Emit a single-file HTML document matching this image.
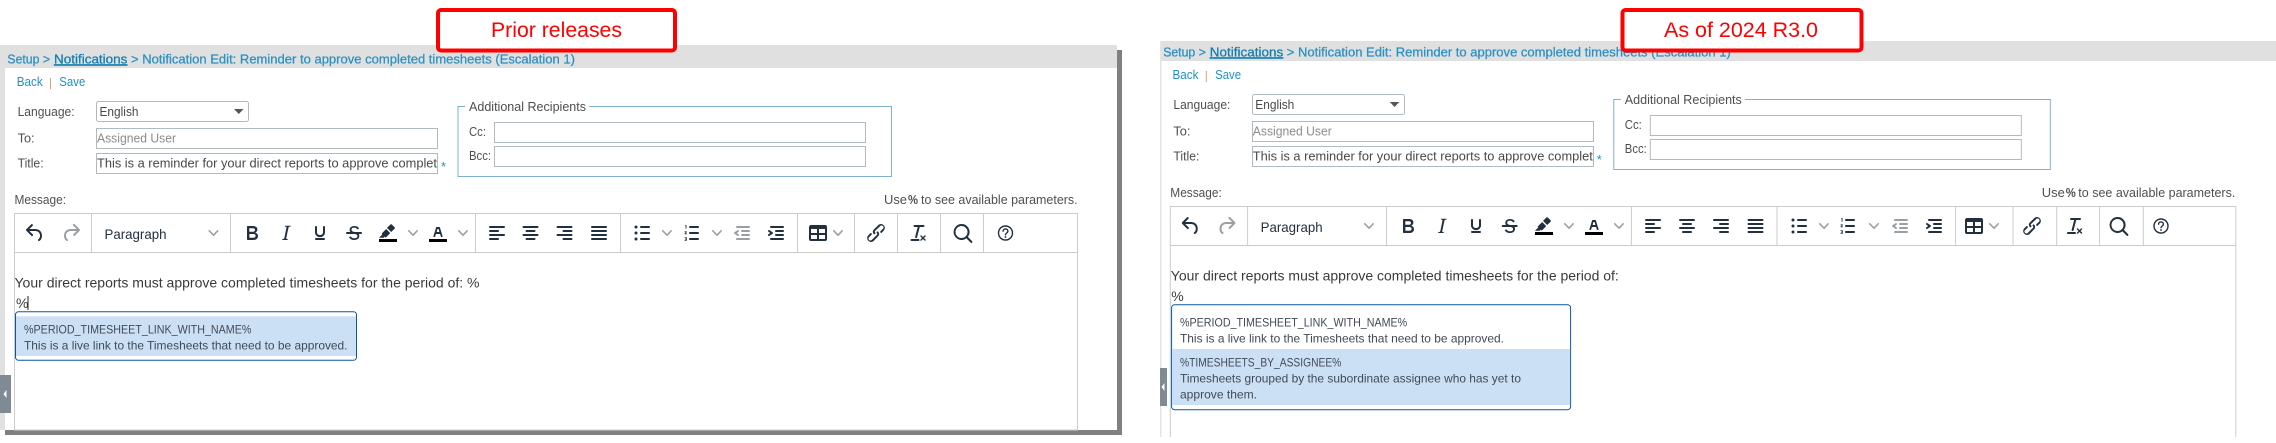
<!DOCTYPE html>
<html lang="en"><head><meta charset="utf-8"><title>Notification Edit comparison</title>
<style>
html,body{margin:0;padding:0;background:#fff;width:2276px;height:443px;overflow:hidden}
svg{display:block}
text{font-family:"Liberation Sans",sans-serif;white-space:pre}
.bc{font-size:13px;fill:#2a90c2;stroke:#2a90c2;stroke-width:.25}
.lk{font-size:13px;fill:#2290c6}
.lb{font-size:13px;fill:#4f4f4f}
.in{font-size:13px;fill:#484848}
.ph{font-size:13px;fill:#8c8c8c}
.msg{font-size:14px;fill:#3a3a3a}
.pp{font-size:12px;fill:#414a55}
.ibox{fill:#fff;stroke:#b0bac0;stroke-width:1}
.i{fill:#222f3e}
.d{fill:#9a9fa5}
.ch{fill:#9aa0a6}
.sep{stroke:#ccc;stroke-width:1}
.red{fill:#f00;font-size:21px}
</style></head><body>
<svg width="2276" height="443" viewBox="0 0 2276 443" xmlns="http://www.w3.org/2000/svg">
<defs>
<symbol id="undo" viewBox="0 0 24 24"><path d="M6.4 8H12c3.7 0 6.2 2 6.8 5.1.6 2.7-.4 5.6-2.3 6.8a1 1 0 0 1-1-1.8c1.1-.7 1.8-2.7 1.4-4.6-.5-2.1-2.1-3.5-4.9-3.5H6.4l3.3 3.3a1 1 0 1 1-1.4 1.4l-5-5a1 1 0 0 1 0-1.4l5-5a1 1 0 0 1 1.4 1.4L6.4 8z"/></symbol>
<symbol id="redo" viewBox="0 0 24 24"><path d="M17.6 10H12c-2.8 0-4.4 1.4-4.9 3.5-.4 2 .3 4 1.4 4.6a1 1 0 1 1-1 1.8c-2-1.2-2.9-4.1-2.3-6.8.6-3 3-5.1 6.8-5.1h5.6l-3.3-3.3a1 1 0 1 1 1.4-1.4l5 5a1 1 0 0 1 0 1.4l-5 5a1 1 0 0 1-1.4-1.4l3.3-3.3z"/></symbol>
<symbol id="bold" viewBox="0 0 24 24"><path d="M7.8 19c-.3 0-.5 0-.6-.2l-.2-.5V5.7c0-.2 0-.4.2-.5l.6-.2h5c1.5 0 2.7.3 3.5 1 .7.6 1.1 1.4 1.1 2.5a3 3 0 0 1-.6 1.9c-.4.6-1 1-1.6 1.2.4.1.9.3 1.3.6s.8.7 1 1.2c.4.4.5 1 .5 1.6 0 1.3-.4 2.3-1.3 3-.8.7-2 1-3.7 1H7.8zm5-8.3c.6 0 1.2-.1 1.6-.5.4-.3.6-.7.6-1.3 0-1.1-.8-1.7-2.3-1.7H9.3v3.5h3.5zm.5 6c.7 0 1.3-.1 1.7-.4.4-.4.6-.9.6-1.5s-.2-1-.7-1.4c-.4-.3-1-.4-2-.4H9.4v3.8h4z"/></symbol>
<symbol id="ital" viewBox="0 0 24 24"><path d="M16.7 4.7l-.1.9h-.3c-.6 0-1 0-1.4.3-.3.3-.4.6-.5 1.1l-2.1 9.8v.6c0 .5.4.8 1.4.8h.2l-.2.8H8l.2-.8h.2c1.1 0 1.8-.5 2-1.5l2-9.8.1-.5c0-.6-.4-.8-1.4-.8h-.3l.2-.9h5.8z"/></symbol>
<symbol id="under" viewBox="0 0 24 24"><path d="M16 5c.6 0 1 .4 1 1v5.5a4 4 0 0 1-.4 1.8l-1 1.4a5.3 5.3 0 0 1-5.5 1 5 5 0 0 1-1.6-1c-.5-.4-.8-.9-1.1-1.4a4 4 0 0 1-.4-1.8V6c0-.6.4-1 1-1s1 .4 1 1v5.5c0 .3 0 .6.2 1l.6.7a3.3 3.3 0 0 0 2.2.8 3.4 3.4 0 0 0 2.2-.8c.3-.2.4-.5.6-.8l.2-.9V6c0-.6.4-1 1-1zM8 17h8c.6 0 1 .4 1 1s-.4 1-1 1H8a1 1 0 0 1 0-2z"/></symbol>
<symbol id="strike" viewBox="0 0 24 24"><path d="M15.6 8.5c-.5-.7-1-1.1-1.3-1.3-.6-.4-1.3-.6-2-.6-2.7 0-2.8 1.7-2.8 2.1 0 1.6 1.8 2 3.2 2.3 4.4.9 4.6 2.8 4.6 3.9 0 1.4-.7 4.1-5 4.1A6.2 6.2 0 0 1 7 16.4l1.5-1.1c.4.6 1.6 2 3.7 2 1.6 0 2.5-.4 3-1.2.4-.8.3-2-.8-2.6-.7-.4-1.6-.7-2.9-1-1-.2-3.9-.8-3.9-3.6C7.6 6 10.3 5 12.4 5c2.9 0 4.2 1.6 4.7 2.4l-1.5 1.1z"/><path d="M5 11h14a1 1 0 0 1 0 2H5a1 1 0 0 1 0-2z"/></symbol>
<symbol id="hl" viewBox="0 0 24 24"><path fill="#000" d="M3 18h18v3H3z"/><path d="M7.7 16.7H3l3.3-3.3-.7-.8L10.2 8l4 4.1-4 4.2c-.2.2-.6.2-.8 0l-.7-.7zm7.5-5.7L11 6.9l3.4-3.4c.4-.4 1-.4 1.4 0l2.8 2.7c.4.4.4 1 0 1.5L15.2 11z"/></symbol>
<symbol id="tc" viewBox="0 0 24 24"><path fill="#000" d="M3 18h18v3H3z"/><path d="M8.7 16h-.8a.5.5 0 0 1-.5-.6l2.7-9c.1-.3.3-.4.5-.4h2.8c.2 0 .4.1.5.4l2.7 9a.5.5 0 0 1-.5.6h-.8a.5.5 0 0 1-.4-.4l-.7-2.2c0-.3-.3-.4-.5-.4h-3.4c-.2 0-.4.1-.5.4l-.7 2.2c0 .3-.2.4-.4.4zm2.6-7.6l-.6 2a.5.5 0 0 0 .5.6h1.6a.5.5 0 0 0 .5-.6l-.6-2c0-.3-.3-.4-.5-.4h-.4c-.2 0-.4.1-.5.4z"/></symbol>
<symbol id="al" viewBox="0 0 24 24"><path d="M5 5h14c.6 0 1 .4 1 1s-.4 1-1 1H5a1 1 0 1 1 0-2zm0 4h8c.6 0 1 .4 1 1s-.4 1-1 1H5a1 1 0 1 1 0-2zm0 8h8c.6 0 1 .4 1 1s-.4 1-1 1H5a1 1 0 0 1 0-2zm0-4h14c.6 0 1 .4 1 1s-.4 1-1 1H5a1 1 0 0 1 0-2z"/></symbol>
<symbol id="ac" viewBox="0 0 24 24"><path d="M5 5h14c.6 0 1 .4 1 1s-.4 1-1 1H5a1 1 0 1 1 0-2zm3 4h8c.6 0 1 .4 1 1s-.4 1-1 1H8a1 1 0 1 1 0-2zm0 8h8c.6 0 1 .4 1 1s-.4 1-1 1H8a1 1 0 0 1 0-2zm-3-4h14c.6 0 1 .4 1 1s-.4 1-1 1H5a1 1 0 0 1 0-2z"/></symbol>
<symbol id="ar" viewBox="0 0 24 24"><path d="M5 5h14c.6 0 1 .4 1 1s-.4 1-1 1H5a1 1 0 1 1 0-2zm6 4h8c.6 0 1 .4 1 1s-.4 1-1 1h-8a1 1 0 0 1 0-2zm0 8h8c.6 0 1 .4 1 1s-.4 1-1 1h-8a1 1 0 0 1 0-2zm-6-4h14c.6 0 1 .4 1 1s-.4 1-1 1H5a1 1 0 0 1 0-2z"/></symbol>
<symbol id="aj" viewBox="0 0 24 24"><path d="M5 5h14c.6 0 1 .4 1 1s-.4 1-1 1H5a1 1 0 1 1 0-2zm0 4h14c.6 0 1 .4 1 1s-.4 1-1 1H5a1 1 0 1 1 0-2zm0 4h14c.6 0 1 .4 1 1s-.4 1-1 1H5a1 1 0 0 1 0-2zm0 4h14c.6 0 1 .4 1 1s-.4 1-1 1H5a1 1 0 0 1 0-2z"/></symbol>
<symbol id="ul" viewBox="0 0 24 24"><path d="M11 5h8c.6 0 1 .4 1 1s-.4 1-1 1h-8a1 1 0 0 1 0-2zm0 6h8c.6 0 1 .4 1 1s-.4 1-1 1h-8a1 1 0 0 1 0-2zm0 6h8c.6 0 1 .4 1 1s-.4 1-1 1h-8a1 1 0 0 1 0-2z"/><circle cx="6" cy="6" r="1.5"/><circle cx="6" cy="12" r="1.5"/><circle cx="6" cy="18" r="1.5"/></symbol>
<symbol id="ol" viewBox="0 0 24 24"><path d="M10 17h8c.6 0 1 .4 1 1s-.4 1-1 1h-8a1 1 0 0 1 0-2zm0-6h8c.6 0 1 .4 1 1s-.4 1-1 1h-8a1 1 0 0 1 0-2zm0-6h8c.6 0 1 .4 1 1s-.4 1-1 1h-8a1 1 0 1 1 0-2z"/><path d="M5.6 4h.9v3.6h-.9V5H5zM4.6 10.4h2.2v.8l-1.3 1.2h1.3v.8H4.6v-.8l1.3-1.2H4.6zM4.6 16.3h2.2v3.4H4.6v-.8h1.3v-.5H4.9v-.7h1V17H4.6z"/></symbol>
<symbol id="out" viewBox="0 0 24 24"><path d="M7 5h12c.6 0 1 .4 1 1s-.4 1-1 1H7a1 1 0 1 1 0-2zm5 4h7c.6 0 1 .4 1 1s-.4 1-1 1h-7a1 1 0 0 1 0-2zm0 4h7c.6 0 1 .4 1 1s-.4 1-1 1h-7a1 1 0 0 1 0-2zm-5 4h12a1 1 0 0 1 0 2H7a1 1 0 0 1 0-2zm1.6-3.8a1 1 0 0 1-1.2 1.6l-3-2a1 1 0 0 1 0-1.6l3-2a1 1 0 0 1 1.2 1.6L6.8 12l1.8 1.2z"/></symbol>
<symbol id="ind" viewBox="0 0 24 24"><path d="M7 5h12c.6 0 1 .4 1 1s-.4 1-1 1H7a1 1 0 1 1 0-2zm5 4h7c.6 0 1 .4 1 1s-.4 1-1 1h-7a1 1 0 0 1 0-2zm0 4h7c.6 0 1 .4 1 1s-.4 1-1 1h-7a1 1 0 0 1 0-2zm-5 4h12a1 1 0 0 1 0 2H7a1 1 0 0 1 0-2zm-2.6-3.8L6.2 12l-1.8-1.2a1 1 0 0 1 1.2-1.6l3 2a1 1 0 0 1 0 1.6l-3 2a1 1 0 1 1-1.2-1.6z"/></symbol>
<symbol id="tbl" viewBox="0 0 24 24"><path fill-rule="evenodd" d="M19 4a2 2 0 0 1 2 2v12a2 2 0 0 1-2 2H5a2 2 0 0 1-2-2V6c0-1.1.9-2 2-2h14zM5 14v4h6v-4H5zm14 0h-6v4h6v-4zm0-6h-6v4h6V8zM5 12h6V8H5v4z"/></symbol>
<symbol id="lnk" viewBox="0 0 24 24"><path d="M6.2 12.3a1 1 0 0 1 1.4 1.4l-2 2a2 2 0 1 0 2.6 2.8l4.8-4.8a1 1 0 0 0 0-1.4 1 1 0 1 1 1.4-1.3 2.9 2.9 0 0 1 0 4L9.6 20a3.9 3.9 0 0 1-5.5-5.5l2-2zm11.6-.6a1 1 0 0 1-1.4-1.4l2-2a2 2 0 1 0-2.6-2.8L11 10a1 1 0 0 0 0 1.4 1 1 0 1 1-1.4 1.3 2.9 2.9 0 0 1 0-4L14.4 4a3.9 3.9 0 0 1 5.5 5.5l-2 2z"/></symbol>
<symbol id="tx" viewBox="0 0 24 24"><path d="M13.2 6a1 1 0 0 1 0 .2l-2.6 10a1 1 0 0 1-1 .8h-.2a.8.8 0 0 1-.8-1l2.6-10H8a1 1 0 1 1 0-2h9a1 1 0 0 1 0 2h-3.8zM5 18h7a1 1 0 0 1 0 2H5a1 1 0 0 1 0-2zm13 1.5L16.5 18 15 19.5a.7.7 0 0 1-1-1l1.5-1.5-1.5-1.5a.7.7 0 0 1 1-1l1.5 1.5 1.5-1.5a.7.7 0 0 1 1 1L17.5 17l1.5 1.5a.7.7 0 0 1-1 1z"/></symbol>
<symbol id="srch" viewBox="0 0 24 24"><path fill-rule="evenodd" d="M16 17.3a8 8 0 1 1 1.4-1.4l4.3 4.4a1 1 0 0 1-1.4 1.4l-4.4-4.3zm-5-.3a6 6 0 1 0 0-12 6 6 0 0 0 0 12z"/></symbol>
<symbol id="hlp" viewBox="0 0 24 24"><circle cx="12" cy="12" r="7" fill="none" stroke="#222f3e" stroke-width="1.4"/><path d="M9.6 10.2c0-1.4 1.1-2.3 2.4-2.3s2.4.9 2.4 2.2c0 1.9-2.4 1.9-2.4 3.7" fill="none" stroke="#222f3e" stroke-width="1.4" stroke-linecap="round"/><circle cx="12" cy="16" r=".9"/></symbol>
<symbol id="chv" viewBox="0 0 10 10"><path d="M8.7 2.2c.3-.3.8-.3 1 0 .4.4.4.9 0 1.2L5.7 7.8c-.3.3-.9.3-1.2 0L.2 3.4a.8.8 0 0 1 0-1.2c.3-.3.8-.3 1.1 0L5 6l3.7-3.8z"/></symbol>
</defs>

<!-- LEFT PANEL -->
<g>
<rect x="1117" y="50" width="5" height="385" fill="#808080"/>
<rect x="5" y="430" width="1117" height="5" fill="#808080"/>
<rect x="0" y="45" width="1117" height="23" fill="#e0e0e0"/>
<rect x="0" y="45" width="5" height="385" fill="#e0e0e0"/>
<text class="bc" x="7.4" y="63.3" textLength="42.6" lengthAdjust="spacingAndGlyphs">Setup &gt;</text>
<text class="bc" x="54" y="63.3" textLength="73.4" lengthAdjust="spacingAndGlyphs" style="fill:#0f7db0;stroke:#0f7db0;text-decoration:underline">Notifications</text>
<text class="bc" x="131" y="63.3" textLength="444" lengthAdjust="spacingAndGlyphs">&gt; Notification Edit: Reminder to approve completed timesheets (Escalation 1)</text>
<text class="lk" x="16.7" y="86" textLength="26" lengthAdjust="spacingAndGlyphs">Back</text>
<rect x="50" y="78" width="1" height="11" fill="#d9a273"/>
<text class="lk" x="59.3" y="86" textLength="26" lengthAdjust="spacingAndGlyphs">Save</text>
<text class="lb" x="17.6" y="116" textLength="57" lengthAdjust="spacingAndGlyphs">Language:</text>
<rect class="ibox" x="96.5" y="101.5" width="152" height="20" rx="2"/>
<text class="in" x="99.5" y="116" textLength="39" lengthAdjust="spacingAndGlyphs">English</text>
<path d="M234 109h9.5l-4.7 5z" fill="#555"/>
<text class="lb" x="17.6" y="142.7" textLength="17" lengthAdjust="spacingAndGlyphs">To:</text>
<rect class="ibox" x="96.5" y="128.5" width="341" height="20"/>
<text class="ph" x="97" y="142.7" textLength="79" lengthAdjust="spacingAndGlyphs">Assigned User</text>
<text class="lb" x="17.6" y="167.7" textLength="26" lengthAdjust="spacingAndGlyphs">Title:</text>
<rect class="ibox" x="96.5" y="153.5" width="341" height="20"/>
<text class="in" x="97" y="167.7" textLength="340" lengthAdjust="spacingAndGlyphs">This is a reminder for your direct reports to approve complet</text>
<text x="441" y="171" style="font-size:13px;fill:#2290c6">*</text>
<rect x="458" y="106.5" width="433.5" height="70" fill="none" stroke="#7fb2cf"/>
<rect x="465" y="104" width="124" height="6" fill="#fff"/>
<text class="lb" x="469" y="111" textLength="117" lengthAdjust="spacingAndGlyphs">Additional Recipients</text>
<text class="lb" x="469" y="136" textLength="17" lengthAdjust="spacingAndGlyphs">Cc:</text>
<rect class="ibox" x="494.5" y="122.5" width="371" height="20"/>
<text class="lb" x="469" y="160" textLength="22" lengthAdjust="spacingAndGlyphs">Bcc:</text>
<rect class="ibox" x="494.5" y="146.5" width="371" height="20"/>
<text class="lb" x="14.5" y="204" textLength="51.5" lengthAdjust="spacingAndGlyphs">Message:</text>
<text class="lb" x="884" y="204" textLength="23" lengthAdjust="spacingAndGlyphs">Use</text>
<text class="lb" x="908" y="204" textLength="10" lengthAdjust="spacingAndGlyphs" style="font-weight:bold">%</text>
<text class="lb" x="921" y="204" textLength="156.6" lengthAdjust="spacingAndGlyphs">to see available parameters.</text>
<rect x="14.5" y="213.5" width="1063" height="216.5" fill="#fff" stroke="#ccc"/>
<path class="sep" d="M14.5 252.5H1077.5M91.5 213v39M230.5 213v39M475.5 213v39M620.5 213v39M797.5 213v39M854.5 213v39M897.5 213v39M940.5 213v39M983.5 213v39"/>
<use href="#undo" x="23" y="221" width="24" height="24" class="i"/>
<use href="#redo" x="59" y="221" width="24" height="24" class="d"/>
<text x="104.5" y="239" textLength="62" lengthAdjust="spacingAndGlyphs" style="font-size:14px;fill:#222f3e">Paragraph</text>
<use href="#chv" x="208.5" y="228" width="10" height="10" class="ch"/>
<use href="#bold" x="240" y="221" width="24" height="24" class="i"/>
<use href="#ital" x="274" y="221" width="24" height="24" class="i"/>
<use href="#under" x="308" y="221" width="24" height="24" class="i"/>
<use href="#strike" x="342" y="221" width="24" height="24" class="i"/>
<use href="#hl" x="376" y="221" width="24" height="24" class="i"/>
<use href="#chv" x="408" y="228" width="10" height="10" class="ch"/>
<use href="#tc" x="426" y="221" width="24" height="24" class="i"/>
<use href="#chv" x="458" y="228" width="10" height="10" class="ch"/>
<use href="#al" x="485" y="221" width="24" height="24" class="i"/>
<use href="#ac" x="518.5" y="221" width="24" height="24" class="i"/>
<use href="#ar" x="552.5" y="221" width="24" height="24" class="i"/>
<use href="#aj" x="587" y="221" width="24" height="24" class="i"/>
<use href="#ul" x="630" y="221" width="24" height="24" class="i"/>
<use href="#chv" x="662" y="228" width="10" height="10" class="ch"/>
<use href="#ol" x="680" y="221" width="24" height="24" class="i"/>
<use href="#chv" x="712" y="228" width="10" height="10" class="ch"/>
<use href="#out" x="730" y="221" width="24" height="24" class="d"/>
<use href="#ind" x="764" y="221" width="24" height="24" class="i"/>
<use href="#tbl" x="806" y="221" width="24" height="24" class="i"/>
<use href="#chv" x="833" y="228" width="10" height="10" class="ch"/>
<use href="#lnk" x="864" y="221" width="24" height="24" class="i"/>
<use href="#tx" x="906.5" y="221" width="24" height="24" class="i"/>
<use href="#srch" x="950.5" y="221" width="24" height="24" class="i"/>
<use href="#hlp" x="993.5" y="221" width="24" height="24" class="i"/>
<text class="msg" x="14.5" y="287.7" textLength="465" lengthAdjust="spacingAndGlyphs">Your direct reports must approve completed timesheets for the period of: %</text>
<text class="msg" x="16" y="308">%</text>
<rect x="27.5" y="296" width="1" height="14" fill="#222"/>
<rect x="15.5" y="311.7" width="341" height="48.6" rx="3" fill="#fff" stroke="#0b56a4"/>
<rect x="16" y="316.3" width="340" height="39.7" fill="#cce0f5"/>
<text class="pp" x="24" y="333.3" textLength="227.4" lengthAdjust="spacingAndGlyphs">%PERIOD_TIMESHEET_LINK_WITH_NAME%</text>
<text class="pp" x="24" y="349.3" textLength="323.5" lengthAdjust="spacingAndGlyphs">This is a live link to the Timesheets that need to be approved.</text>
<rect x="0" y="375" width="11" height="38" fill="#7f8a94"/>
<path d="M6.5 390v8l-3-4z" fill="#fff"/>
</g>

<!-- RIGHT PANEL -->
<rect x="1160" y="41" width="1116" height="20" fill="#e0e0e0"/>
<rect x="1160" y="41" width="1.5" height="396" fill="#e4e4e4"/>
<g transform="translate(1155.8,-7)">
<text class="bc" x="7.4" y="63.3" textLength="42.6" lengthAdjust="spacingAndGlyphs">Setup &gt;</text>
<text class="bc" x="54" y="63.3" textLength="73.4" lengthAdjust="spacingAndGlyphs" style="fill:#0f7db0;stroke:#0f7db0;text-decoration:underline">Notifications</text>
<text class="bc" x="131" y="63.3" textLength="444" lengthAdjust="spacingAndGlyphs">&gt; Notification Edit: Reminder to approve completed timesheets (Escalation 1)</text>
<text class="lk" x="16.7" y="86" textLength="26" lengthAdjust="spacingAndGlyphs">Back</text>
<rect x="50" y="78" width="1" height="11" fill="#d9a273"/>
<text class="lk" x="59.3" y="86" textLength="26" lengthAdjust="spacingAndGlyphs">Save</text>
<text class="lb" x="17.6" y="116" textLength="57" lengthAdjust="spacingAndGlyphs">Language:</text>
<rect class="ibox" x="96.7" y="101.5" width="152" height="20" rx="2"/>
<text class="in" x="99.5" y="116" textLength="39" lengthAdjust="spacingAndGlyphs">English</text>
<path d="M234 109h9.5l-4.7 5z" fill="#555"/>
<text class="lb" x="17.6" y="142.7" textLength="17" lengthAdjust="spacingAndGlyphs">To:</text>
<rect class="ibox" x="96.7" y="128.5" width="341" height="20"/>
<text class="ph" x="97" y="142.7" textLength="79" lengthAdjust="spacingAndGlyphs">Assigned User</text>
<text class="lb" x="17.6" y="167.7" textLength="26" lengthAdjust="spacingAndGlyphs">Title:</text>
<rect class="ibox" x="96.7" y="153.5" width="341" height="20"/>
<text class="in" x="97" y="167.7" textLength="340" lengthAdjust="spacingAndGlyphs">This is a reminder for your direct reports to approve complet</text>
<text x="441" y="171" style="font-size:13px;fill:#2290c6">*</text>
<rect x="458" y="106.5" width="436.5" height="70" fill="none" stroke="#7fb2cf"/>
<rect x="465" y="104" width="124" height="6" fill="#fff"/>
<text class="lb" x="469" y="111" textLength="117" lengthAdjust="spacingAndGlyphs">Additional Recipients</text>
<text class="lb" x="469" y="136" textLength="17" lengthAdjust="spacingAndGlyphs">Cc:</text>
<rect class="ibox" x="494.5" y="122.5" width="371" height="20"/>
<text class="lb" x="469" y="160" textLength="22" lengthAdjust="spacingAndGlyphs">Bcc:</text>
<rect class="ibox" x="494.5" y="146.5" width="371" height="20"/>
<text class="lb" x="14.5" y="204" textLength="51.5" lengthAdjust="spacingAndGlyphs">Message:</text>
<text class="lb" x="886" y="204" textLength="23" lengthAdjust="spacingAndGlyphs">Use</text>
<text class="lb" x="910" y="204" textLength="10" lengthAdjust="spacingAndGlyphs" style="font-weight:bold">%</text>
<text class="lb" x="922.5" y="204" textLength="157" lengthAdjust="spacingAndGlyphs">to see available parameters.</text>
<path d="M14.5 444V213.5H1080V444" fill="#fff" stroke="#ccc"/>
<path class="sep" d="M14.5 252.5H1080M91.8 213v39M230.7 213v39M475.6 213v39M621.2 213v39M799.8 213v39M857.2 213v39M900.9 213v39M943.8 213v39M987.5 213v39"/>
<use href="#undo" x="23" y="221" width="24" height="24" class="i"/>
<use href="#redo" x="58.7" y="221" width="24" height="24" class="d"/>
<text x="104.8" y="239" textLength="62" lengthAdjust="spacingAndGlyphs" style="font-size:14px;fill:#222f3e">Paragraph</text>
<use href="#chv" x="208.2" y="228" width="10" height="10" class="ch"/>
<use href="#bold" x="240.2" y="221" width="24" height="24" class="i"/>
<use href="#ital" x="274.2" y="221" width="24" height="24" class="i"/>
<use href="#under" x="308.2" y="221" width="24" height="24" class="i"/>
<use href="#strike" x="341.9" y="221" width="24" height="24" class="i"/>
<use href="#hl" x="376.2" y="221" width="24" height="24" class="i"/>
<use href="#chv" x="408.2" y="228" width="10" height="10" class="ch"/>
<use href="#tc" x="426.2" y="221" width="24" height="24" class="i"/>
<use href="#chv" x="458.2" y="228" width="10" height="10" class="ch"/>
<use href="#al" x="485.2" y="221" width="24" height="24" class="i"/>
<use href="#ac" x="519.2" y="221" width="24" height="24" class="i"/>
<use href="#ar" x="553.2" y="221" width="24" height="24" class="i"/>
<use href="#aj" x="587.7" y="221" width="24" height="24" class="i"/>
<use href="#ul" x="631.2" y="221" width="24" height="24" class="i"/>
<use href="#chv" x="663.2" y="228" width="10" height="10" class="ch"/>
<use href="#ol" x="680.2" y="221" width="24" height="24" class="i"/>
<use href="#chv" x="713.2" y="228" width="10" height="10" class="ch"/>
<use href="#out" x="732.2" y="221" width="24" height="24" class="d"/>
<use href="#ind" x="766.2" y="221" width="24" height="24" class="i"/>
<use href="#tbl" x="806.2" y="221" width="24" height="24" class="i"/>
<use href="#chv" x="833.2" y="228" width="10" height="10" class="ch"/>
<use href="#lnk" x="864.2" y="221" width="24" height="24" class="i"/>
<use href="#tx" x="907.2" y="221" width="24" height="24" class="i"/>
<use href="#srch" x="950.7" y="221" width="24" height="24" class="i"/>
<use href="#hlp" x="993.2" y="221" width="24" height="24" class="i"/>
<text class="msg" x="15" y="287.7" textLength="448" lengthAdjust="spacingAndGlyphs">Your direct reports must approve completed timesheets for the period of:</text>
<text class="msg" x="15.5" y="308">%</text>
<rect x="15.8" y="311.7" width="399" height="105" rx="3" fill="#fff" stroke="#0b56a4"/>
<rect x="16.3" y="356" width="398" height="56" fill="#cce0f5"/>
<text class="pp" x="24.2" y="333.7" textLength="227.2" lengthAdjust="spacingAndGlyphs">%PERIOD_TIMESHEET_LINK_WITH_NAME%</text>
<text class="pp" x="24.2" y="349.7" textLength="324" lengthAdjust="spacingAndGlyphs">This is a live link to the Timesheets that need to be approved.</text>
<text class="pp" x="24.2" y="373.7" textLength="161.3" lengthAdjust="spacingAndGlyphs">%TIMESHEETS_BY_ASSIGNEE%</text>
<text class="pp" x="24.2" y="389.7" textLength="341" lengthAdjust="spacingAndGlyphs">Timesheets grouped by the subordinate assignee who has yet to</text>
<text class="pp" x="24.2" y="405.3" textLength="77" lengthAdjust="spacingAndGlyphs">approve them.</text>
</g>
<rect x="1160" y="368" width="7" height="38" fill="#7f8a94"/>
<path d="M1164.5 383v8l-3-4z" fill="#fff"/>

<!-- CALLOUTS -->
<rect x="438" y="10" width="237" height="40.5" rx="3" fill="#fff" stroke="#f00" stroke-width="4"/>
<text class="red" x="491" y="37" textLength="131" lengthAdjust="spacingAndGlyphs">Prior releases</text>
<rect x="1622.5" y="10" width="239" height="40.5" rx="3" fill="#fff" stroke="#f00" stroke-width="4"/>
<text class="red" x="1664" y="37" textLength="154" lengthAdjust="spacingAndGlyphs">As of 2024 R3.0</text>
</svg>
</body></html>
